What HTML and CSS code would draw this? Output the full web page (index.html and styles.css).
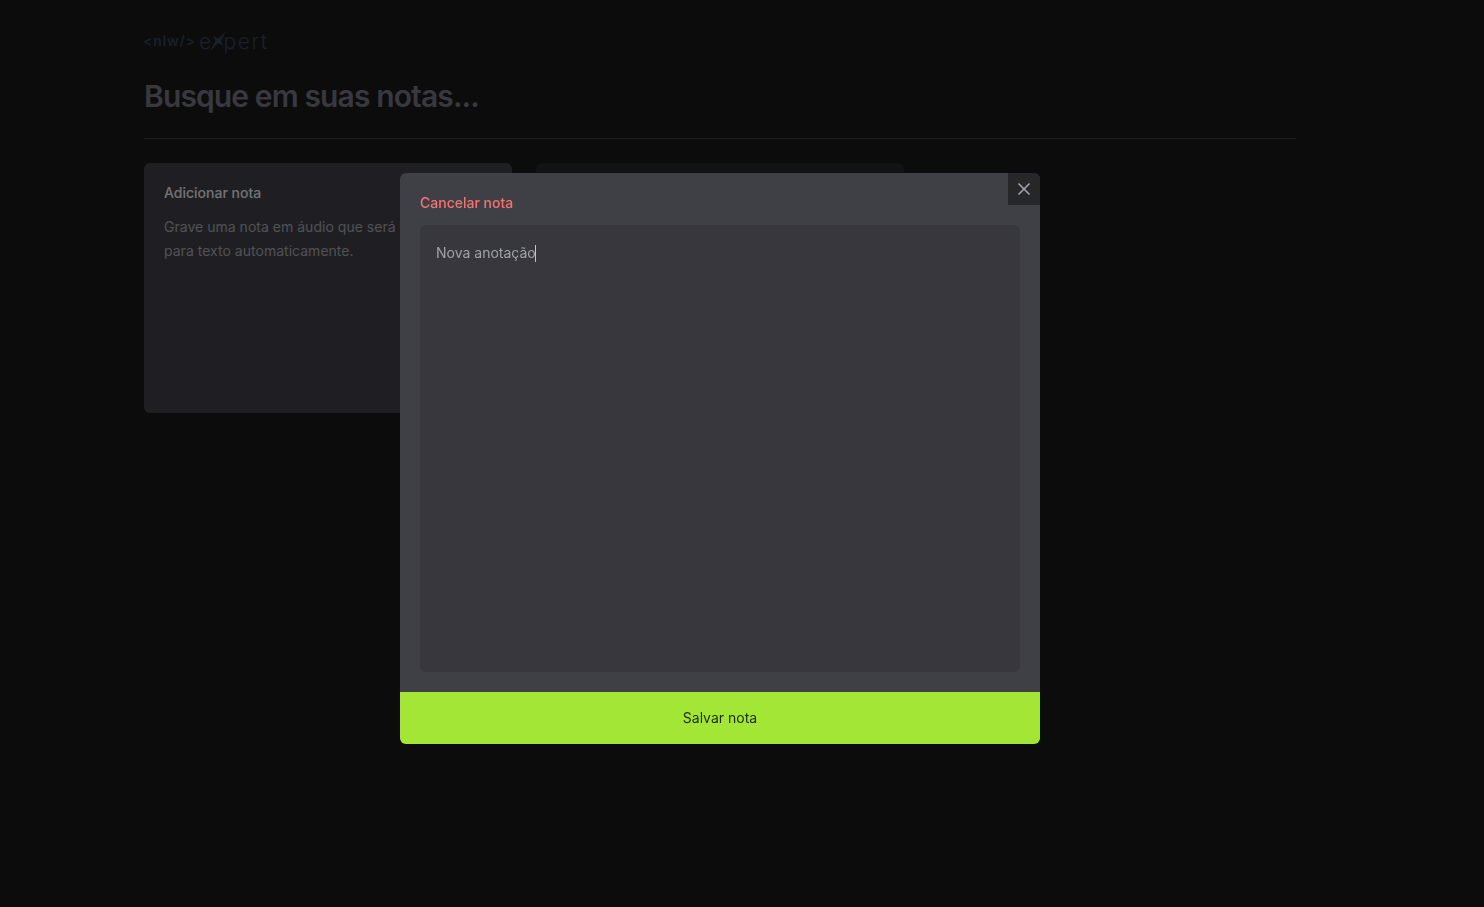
FILE: index.html
```html
<!DOCTYPE html>
<html lang="en">
<head>
    <meta charset="UTF-8">
    <meta name="viewport" content="width=device-width, initial-scale=1.0">
    <title>NLW Expert</title>
    <link rel="stylesheet" href="styles.css">
</head>
<body>
    <main class="page">
        <div class="logo">
            <span class="logo-tag">&lt;nlw/&gt;</span>
            <span class="logo-word">e<svg class="logo-x" viewBox="0 0 18 22" width="18" height="22"><path d="M17 1 12 11 14.5 16 9 13 1 21 6.5 11 4 6 9.5 8.5Z" fill="currentColor"/></svg>pert</span>
        </div>

        <h1 class="search">Busque em suas notas...</h1>
        <div class="divider"></div>

        <div class="notes">
            <div class="card card-add">
                <span class="card-title">Adicionar nota</span>
                <p class="card-text">Grave uma nota em áudio que será convertida para texto automaticamente.</p>
            </div>
            <div class="card card-note"></div>
        </div>
    </main>

    <div class="overlay"></div>

    <div class="dialog">
        <button class="close" type="button" aria-label="Fechar">
            <svg viewBox="0 0 24 24" width="20" height="20" fill="none" stroke="currentColor" stroke-width="2" stroke-linecap="round"><path d="M18 6 6 18"/><path d="m6 6 12 12"/></svg>
        </button>
        <div class="dialog-body">
            <span class="cancel">Cancelar nota</span>
            <div class="editor"><span class="editor-text">Nova anotação</span><span class="caret"></span></div>
        </div>
        <button class="save" type="button">Salvar nota</button>
    </div>
</body>
</html>
```

FILE: styles.css
```css
* {
    margin: 0;
    padding: 0;
    box-sizing: border-box;
}

body {
    font-family: Inter, "Liberation Sans", sans-serif;
    background-color: #18181b;
    color: #d4d4d8;
    height: 100vh;
    overflow: hidden;
}

/* Page behind the dialog */
.page {
    width: 1152px;
    margin-left: 144px;
    padding-top: 24px;
}

.logo {
    display: flex;
    align-items: center;
    gap: 3px;
    height: 34px;
    color: #334155;
}

.logo-tag {
    margin-left: -1px;
    padding-bottom: 2px;
    font-size: 14px;
    font-weight: 600;
    letter-spacing: 0.8px;
}

.logo-word {
    display: flex;
    align-items: center;
    font-size: 21px;
    font-weight: 300;
    letter-spacing: 1.5px;
}

.logo-x {
    margin: 0 -3px 0 -4px;
}

.search {
    margin-top: 20px;
    font-size: 30px;
    line-height: 36px;
    font-weight: 600;
    letter-spacing: -0.88px;
    color: #71717a;
}

.divider {
    height: 1px;
    margin-top: 24px;
    background-color: #3f3f46;
}

.notes {
    display: grid;
    grid-template-columns: repeat(3, 1fr);
    gap: 24px;
    margin-top: 24px;
}

.card {
    height: 250px;
    border-radius: 6px;
}

.card-add {
    padding: 20px;
    background-color: #3f3f46;
}

.card-note {
    background-color: #27272a;
}

.card-title {
    display: block;
    font-size: 14px;
    line-height: 20px;
    font-weight: 500;
    color: #e4e4e7;
}

.card-text {
    margin-top: 12px;
    font-size: 14px;
    line-height: 24px;
    letter-spacing: 0.02px;
    color: #a1a1aa;
}

.overlay {
    position: fixed;
    inset: 0;
    background-color: rgba(0, 0, 0, 0.5);
}

/* Dialog */
.dialog {
    position: fixed;
    top: 173px;
    left: 400px;
    width: 640px;
    height: 571px;
    display: flex;
    flex-direction: column;
    background-color: #3f3f46;
    border-radius: 6px;
    overflow: hidden;
}

.close {
    position: absolute;
    top: 0;
    right: 0;
    display: flex;
    align-items: center;
    justify-content: center;
    width: 32px;
    height: 32px;
    border: none;
    background-color: #27272a;
    color: #a1a1aa;
}

.dialog-body {
    flex: 1;
    display: flex;
    flex-direction: column;
    gap: 12px;
    padding: 20px;
}

.cancel {
    font-size: 14px;
    line-height: 20px;
    font-weight: 500;
    color: #f87171;
}

.editor {
    flex: 1;
    padding: 16px;
    font-size: 14px;
    line-height: 24px;
    color: #a1a1aa;
    background-color: rgba(24, 24, 27, 0.2);
    border-radius: 6px;
}

.caret {
    display: inline-block;
    width: 1px;
    height: 17px;
    margin-left: -1px;
    vertical-align: -4px;
    background-color: #c4c4c8;
}

.save {
    height: 52px;
    padding-bottom: 2px;
    border: none;
    background-color: #a3e635;
    color: #1a2e05;
    font-family: inherit;
    font-size: 14px;
    font-weight: 400;
}
```
